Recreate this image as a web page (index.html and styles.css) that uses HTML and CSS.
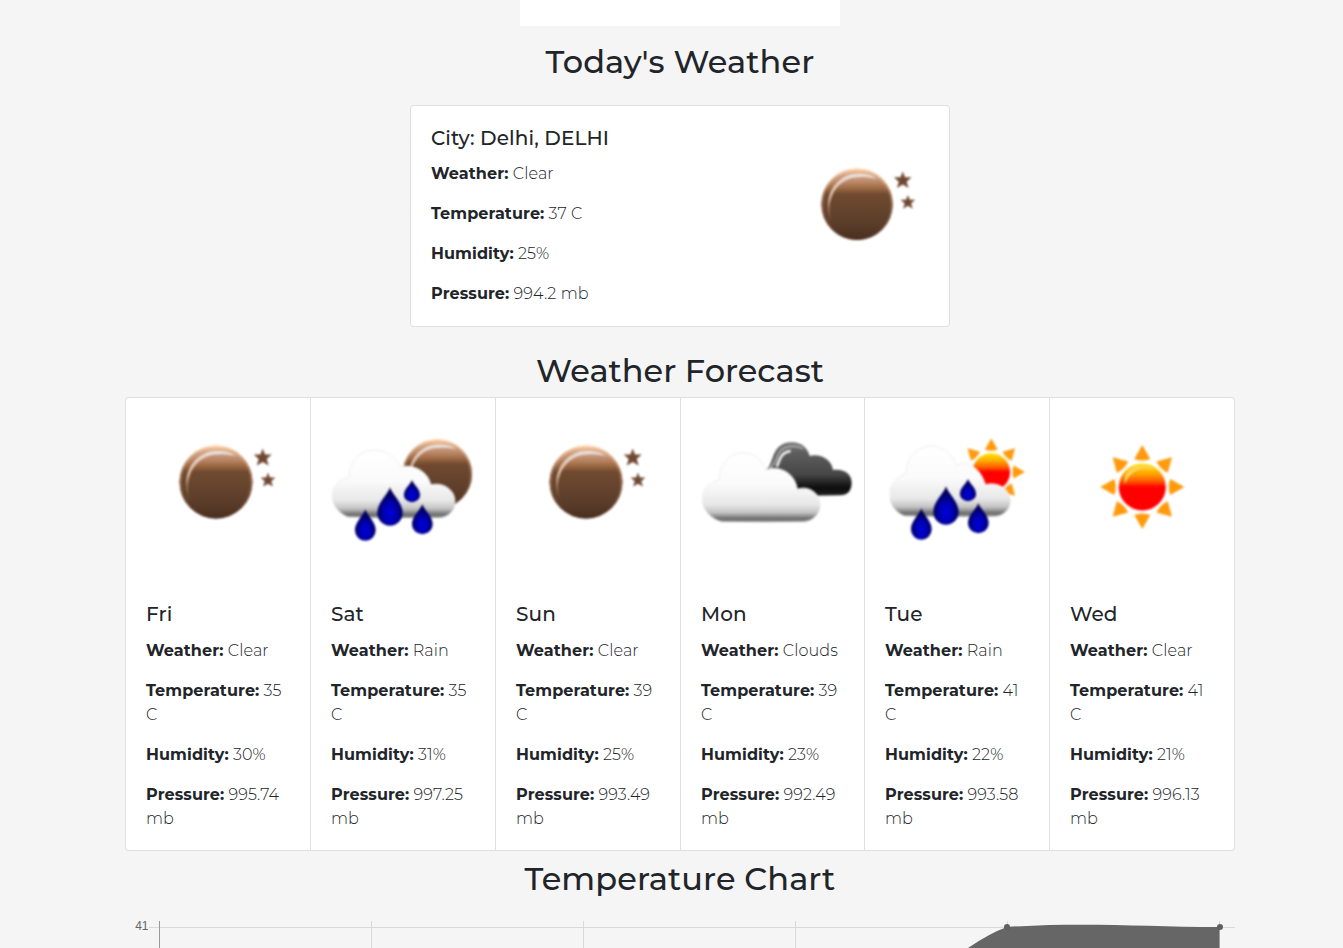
FILE: index.html
```
<!DOCTYPE html>
<html lang="en">
<head>
<meta charset="utf-8">
<title>Weather</title>
<link rel="stylesheet" href="styles.css">
</head>
<body>
<svg class="defs" aria-hidden="true">
  <defs>
    <linearGradient id="moonFill" x1="0" y1="0" x2="0" y2="1">
      <stop offset="0" stop-color="#ffc99b"/><stop offset=".09" stop-color="#cfa58a"/>
      <stop offset=".2" stop-color="#b98564"/><stop offset=".29" stop-color="#97653f"/><stop offset=".36" stop-color="#704a30"/>
      <stop offset=".75" stop-color="#5c3e2a"/><stop offset="1" stop-color="#4a2f20"/>
    </linearGradient>
    <linearGradient id="moonEdge" x1="0" y1="0" x2="0" y2="1">
      <stop offset="0" stop-color="#ffd0a4"/><stop offset=".35" stop-color="#a57858"/><stop offset="1" stop-color="#4a2c1d"/>
    </linearGradient>
    <linearGradient id="shine" x1="0" y1="0" x2="0" y2="1">
      <stop offset="0" stop-color="#eee2dc"/><stop offset=".5" stop-color="#d5b09a"/><stop offset="1" stop-color="#8a5b3c" stop-opacity=".4"/>
    </linearGradient>
    <linearGradient id="cloudFill" x1="0" y1="0" x2="0" y2="1">
      <stop offset="0" stop-color="#fff"/><stop offset=".45" stop-color="#fbfbfb"/><stop offset=".75" stop-color="#e8e8e8"/>
      <stop offset=".87" stop-color="#c2c2c2"/><stop offset=".96" stop-color="#6a6a6a"/><stop offset="1" stop-color="#8a8a8a"/>
    </linearGradient>
    <linearGradient id="cloudLine" x1="0" y1="0" x2="0" y2="1">
      <stop offset="0" stop-color="#ececec"/><stop offset=".7" stop-color="#eee"/><stop offset="1" stop-color="#999"/>
    </linearGradient>
    <linearGradient id="darkFill" x1="0" y1="0" x2="0" y2="1">
      <stop offset="0" stop-color="#777"/><stop offset=".2" stop-color="#5e5e5e"/><stop offset=".6" stop-color="#464646"/><stop offset=".85" stop-color="#0c0c0c"/><stop offset="1" stop-color="#222"/>
    </linearGradient>
    <radialGradient id="dropFill" cx=".5" cy=".68" r=".5">
      <stop offset="0" stop-color="#0000dc"/><stop offset=".5" stop-color="#0000b4"/><stop offset="1" stop-color="#00005c"/>
    </radialGradient>
    <linearGradient id="sunFill" x1="0" y1="0" x2="0" y2="1">
      <stop offset="0" stop-color="#ffe600"/><stop offset=".2" stop-color="#ffac00"/><stop offset=".38" stop-color="#ff5a00"/><stop offset=".5" stop-color="#f00"/><stop offset="1" stop-color="#f00"/>
    </linearGradient>
    <g id="ball">
      <circle r="36.500" fill="url(#moonFill)"/>
      <circle r="35.500" fill="none" stroke="url(#moonEdge)" stroke-width="2"/>
      <path d="M-26 20C-38-9-20-31 1-31C9-31 15-30 20-26C10-28 4-28-4-27C-22-23-33-4-26 20Z" fill="url(#shine)"/>
    </g>
    <path id="star" d="M0-9L2.3-3L9-3L4 1.5L6 8L0 4.500L-6 8L-4 1.500L-9-3L-2.3-3Z"/>
    <path id="drop" d="M0 0C6 22 38 45 38 77A38 38 0 0 1-38 77C-38 45-6 22 0 0Z" fill="url(#dropFill)"/>
    <path id="cloud" d="M115 290C85 280 65 250 67 220C68 195 90 177 118 172C115 130 145 90 190 90C230 90 258 110 272 142C300 130 355 150 362 195C400 185 435 210 435 245C433 272 415 290 390 292Q250 294 115 290Z" fill="url(#cloudFill)" stroke="url(#cloudLine)" stroke-width="3"/>
    <g id="sun">
      <g fill="#ff9a0c">
        <path id="ray" d="M0-42L8-28Q0-25-8-28Z"/>
        <use href="#ray" transform="rotate(45)"/><use href="#ray" transform="rotate(90)"/><use href="#ray" transform="rotate(135)"/>
        <use href="#ray" transform="rotate(180)"/><use href="#ray" transform="rotate(225)"/><use href="#ray" transform="rotate(270)"/><use href="#ray" transform="rotate(315)"/>
      </g>
      <circle r="23.500" fill="url(#sunFill)"/>
    </g>
    <g id="drops">
      <use href="#drop" transform="translate(240 202)"/>
      <use href="#drop" transform="translate(306 180) scale(.64 .58)"/>
      <use href="#drop" transform="translate(166 268) scale(.82)"/>
      <use href="#drop" transform="translate(337 252) scale(.82 .79)"/>
    </g>
    <symbol id="clear-night" viewBox="0 0 184 184">
      <use href="#ball" transform="translate(90 84)"/>
      <g fill="#704832"><use href="#star" transform="translate(136.700 59.500)"/><use href="#star" transform="translate(142 82) scale(.82)"/></g>
    </symbol>
    <symbol id="rain-night" viewBox="0 0 184 184">
      <use href="#ball" transform="translate(126.300 76) scale(.95)"/>
      <g transform="translate(-1 22) scale(.3333)"><use href="#cloud"/><use href="#drops"/></g>
    </symbol>
    <symbol id="clouds" viewBox="0 0 184 184">
      <g transform="translate(-1 22) scale(.3333)">
        <path d="M256 152C285 135 270 65 338 67C365 68 383 84 389 108C420 100 455 118 459 150C490 145 516 160 515 190C514 213 503 226 480 226L340 228Z" fill="url(#darkFill)"/>
        <path d="M268 146C300 125 278 84 337 79Q355 78 369 86" fill="none" stroke="#aaa" stroke-width="6"/>
        <path d="M290 140C300 120 300 97 332 93" fill="none" stroke="#f2f2f2" stroke-width="8"/>
        <path d="M125 304C90 296 65 262 67 232C68 205 90 186 118 180C115 140 145 99 186 99C225 99 245 118 258 150C300 135 345 160 352 208C385 195 420 220 420 252C418 282 400 302 372 304Q250 306 125 304Z" fill="url(#cloudFill)" stroke="url(#cloudLine)" stroke-width="3"/>
      </g>
    </symbol>
    <symbol id="rain-day" viewBox="0 0 184 184">
      <use href="#sun" transform="translate(126.300 74) scale(.8)"/>
      <g transform="translate(0 22) scale(.3333)"><path d="M120 287C90 277 73 250 75 215C76 190 98 170 124 160C122 115 155 78 200 78C240 78 262 105 275 136C300 120 345 138 361 194C400 184 435 207 435 242C433 270 415 286 390 288Q250 290 120 287Z" fill="url(#cloudFill)" stroke="url(#cloudLine)" stroke-width="3"/><use href="#drops" transform="translate(3 -3)"/></g>
    </symbol>
    <symbol id="clear-day" viewBox="0 0 184 184">
      <use href="#sun" transform="translate(92.300 89)"/>
      <path d="M75 86C73 74 82 68 91 68Q99 67 106 72C93 69 81 71 75 86Z" fill="#ffd25c"/>
    </symbol>
  </defs>
</svg>

<main class="page">
  <div class="search-panel"></div>
  <h2 class="title today-title">Today's Weather</h2>
  <section class="card today">
    <div class="card-body">
      <h5 class="name">City: Delhi, DELHI</h5>
      <p><strong>Weather:</strong> Clear</p>
      <p><strong>Temperature:</strong> 37 C</p>
      <p><strong>Humidity:</strong> 25%</p>
      <p><strong>Pressure:</strong> 994.2 mb</p>
    </div>
    <svg class="icon today-icon"><use href="#clear-night"/></svg>
  </section>

  <h2 class="title forecast-title">Weather Forecast</h2>
  <section class="card forecast">
    <article class="day"><svg class="icon"><use href="#clear-night"/></svg><div class="card-body">
      <h5 class="name">Fri</h5><p><strong>Weather:</strong> Clear</p><p><strong>Temperature:</strong> 35<br>C</p><p><strong>Humidity:</strong> 30%</p><p><strong>Pressure:</strong> 995.74<br>mb</p></div></article>
    <article class="day"><svg class="icon"><use href="#rain-night"/></svg><div class="card-body">
      <h5 class="name">Sat</h5><p><strong>Weather:</strong> Rain</p><p><strong>Temperature:</strong> 35<br>C</p><p><strong>Humidity:</strong> 31%</p><p><strong>Pressure:</strong> 997.25<br>mb</p></div></article>
    <article class="day"><svg class="icon"><use href="#clear-night"/></svg><div class="card-body">
      <h5 class="name">Sun</h5><p><strong>Weather:</strong> Clear</p><p><strong>Temperature:</strong> 39<br>C</p><p><strong>Humidity:</strong> 25%</p><p><strong>Pressure:</strong> 993.49<br>mb</p></div></article>
    <article class="day"><svg class="icon"><use href="#clouds"/></svg><div class="card-body">
      <h5 class="name">Mon</h5><p><strong>Weather:</strong> Clouds</p><p><strong>Temperature:</strong> 39<br>C</p><p><strong>Humidity:</strong> 23%</p><p><strong>Pressure:</strong> 992.49<br>mb</p></div></article>
    <article class="day"><svg class="icon"><use href="#rain-day"/></svg><div class="card-body">
      <h5 class="name">Tue</h5><p><strong>Weather:</strong> Rain</p><p><strong>Temperature:</strong> 41<br>C</p><p><strong>Humidity:</strong> 22%</p><p><strong>Pressure:</strong> 993.58<br>mb</p></div></article>
    <article class="day"><svg class="icon"><use href="#clear-day"/></svg><div class="card-body">
      <h5 class="name">Wed</h5><p><strong>Weather:</strong> Clear</p><p><strong>Temperature:</strong> 41<br>C</p><p><strong>Humidity:</strong> 21%</p><p><strong>Pressure:</strong> 996.13<br>mb</p></div></article>
  </section>

  <h2 class="title chart-title">Temperature Chart</h2>
  <svg class="chart" viewBox="0 0 1110 38">
    <path d="M24 17.500H1110M246.500 11V38M458.500 11V38M670.500 11V38M882.500 11V38M1094.500 11V38" stroke="#d9d9d9" fill="none"/>
    <path d="M34.500 11V38" stroke="#999"/>
    <text x="23.500" y="20" text-anchor="end" class="tick">41</text>
    <path d="M843 38Q865 23 882 17C960 12 1020 17 1094.500 17V38Z" fill="#666"/>
    <circle cx="882" cy="17" r="3" fill="#606060"/><circle cx="1095" cy="17" r="3" fill="#606060"/>
  </svg>
</main>
</body>
</html>
```
FILE: styles.css
```
* { box-sizing: border-box; }
html { overflow: hidden; }
body {
  margin: 0;
  width: 1360px;
  height: 948px;
  overflow: hidden;
  background: #f5f5f5;
  color: #212529;
  font: 300 16px/24px Montserrat, Inter, "Open Sans", sans-serif;
  letter-spacing: 0.1px;
}
.defs { display: block; width: 0; height: 0; }
.page { width: 1110px; margin: 0 auto; }
.search-panel { width: 320px; height: 26px; margin: 0 auto; background: #fff; }
.title {
  margin: 0;
  height: 38px;
  font-size: 32px;
  line-height: 38px;
  font-weight: 500;
  text-align: center;
}
.today-title { margin-top: 17px; }
.forecast-title { margin-top: 25px; letter-spacing: 0; }
.chart-title { margin-top: 9px; }
.card { background: #fff; border: 1px solid #dfdfdf; border-radius: 4px; }
.today {
  display: flex;
  justify-content: space-between;
  width: 540px;
  height: 222px;
  margin: 24px auto 0;
}
.card-body { padding: 20px; white-space: nowrap; }
.name { margin: 0 0 12px; height: 24px; font-size: 20px; line-height: 24px; font-weight: 500; }
.day .name { margin-bottom: 13px; }
p { margin: 0 0 16px; }
p:last-child { margin-bottom: 0; }
strong { font-weight: 700; }
.icon { display: block; width: 184px; height: 184px; filter: blur(1px); }
.today-icon { width: 180px; height: 180px; margin-top: 16px; }
.forecast {
  display: grid;
  grid-template-columns: 184px 185px 185px 184px 185px 185px;
  height: 454px;
  margin-top: 7px;
}
.day { min-width: 0; border-left: 1px solid #dfdfdf; }
.day:first-child { border-left: 0; }
.chart { display: block; width: 1110px; height: 38px; margin-top: 12px; }
.tick { font: 12px "Liberation Sans", sans-serif; letter-spacing: 0; fill: #666; }
```
